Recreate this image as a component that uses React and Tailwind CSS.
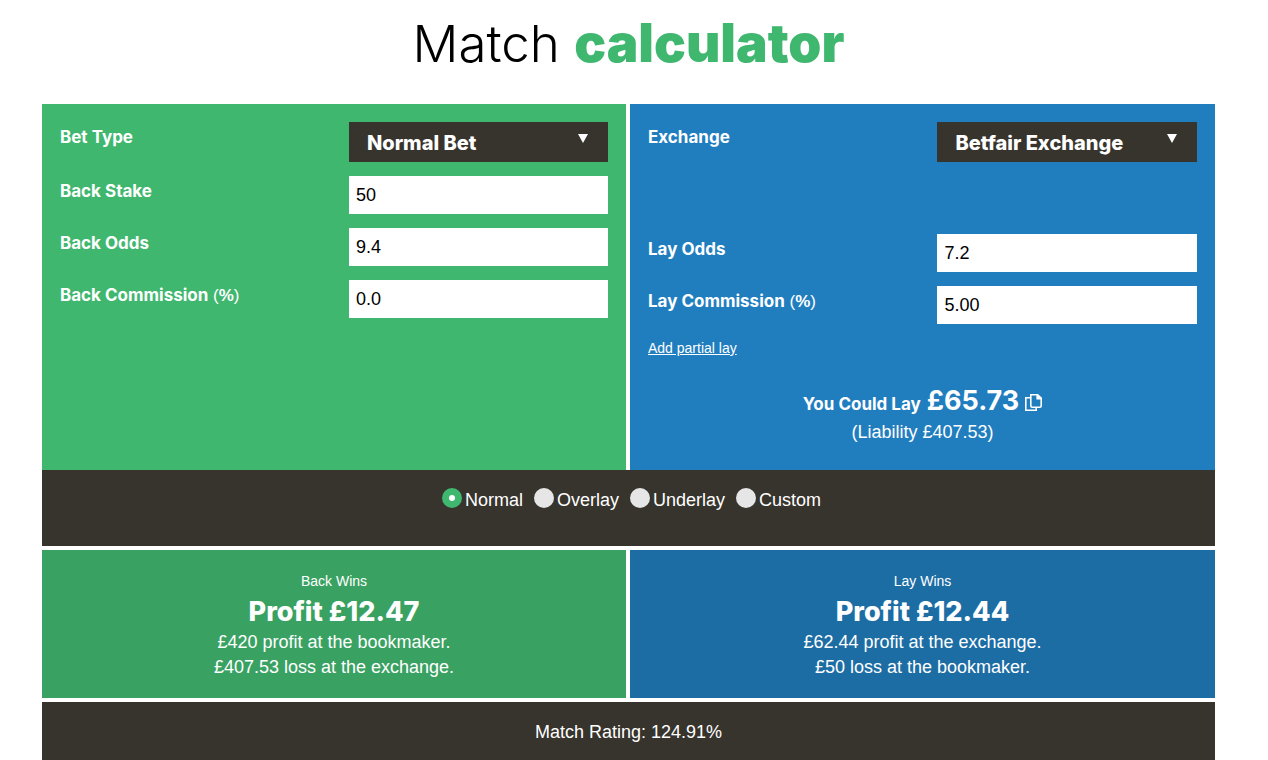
import React, { useState } from 'react';

const STAKE_MODES = ['Normal', 'Overlay', 'Underlay', 'Custom'];

function Row({ id, label, percent, children }) {
  return (
    <div className="grid grid-cols-[29fr_26fr] items-start">
      <label htmlFor={id} className="pt-[3px] font-['Inter',sans-serif] text-[17px] leading-6 font-bold">
        {label}
        {percent && (
          <span className="font-['Liberation_Sans',sans-serif] font-normal"> (<b>%</b>)</span>
        )}
      </label>
      {children}
    </div>
  );
}

function SelectBox({ id, options }) {
  return (
    <div className="relative">
      <select
        id={id}
        className="block h-10 w-full appearance-none bg-[#37342d] px-[18px] pt-0.5 font-['Inter',sans-serif] text-[20px] font-extrabold text-white outline-none"
      >
        {options.map(o => <option key={o}>{o}</option>)}
      </select>
      <svg width="10" height="9" viewBox="0 0 10 9" className="pointer-events-none absolute top-3 right-5">
        <path d="M0 0H10L5 9Z" fill="#fff" />
      </svg>
    </div>
  );
}

function TextField({ id, value }) {
  return (
    <input
      id={id}
      type="text"
      defaultValue={value}
      className="block h-[38px] w-full bg-white px-[7px] font-['Liberation_Sans',sans-serif] text-lg text-black outline-none"
    />
  );
}

function Outcome({ title, profit, lines, className }) {
  return (
    <section className={`flex h-[148px] flex-col items-center pt-[19px] text-center ${className}`}>
      <h2 className="text-sm leading-6">{title}</h2>
      <p className="font-['Inter',sans-serif] text-[27px] leading-[37px] font-extrabold">Profit {profit}</p>
      {lines.map(line => <p key={line} className="text-lg leading-[25px]">{line}</p>)}
    </section>
  );
}

export default function App() {
  const [mode, setMode] = useState('Normal');

  return (
    <main className="bg-white pr-[53px] pl-[42px] font-['Liberation_Sans',sans-serif] text-white">
      <h1 className="h-[104px] pt-2 text-center font-['Inter',sans-serif] text-[51px] leading-[70px] font-light text-black">
        Match <span className="text-[53px] font-black text-[#3fb76f]">calculator</span>
      </h1>

      <div className="grid grid-cols-[584fr_585fr] gap-x-1">
        {/* Back side */}
        <section className="flex h-[366px] flex-col gap-3.5 bg-[#3fb76f] p-[18px]">
          <Row id="bet-type" label="Bet Type">
            <SelectBox id="bet-type" options={['Normal Bet', 'Free Bet (SNR)', 'Free Bet (SR)']} />
          </Row>
          <Row id="back-stake" label="Back Stake"><TextField id="back-stake" value="50" /></Row>
          <Row id="back-odds" label="Back Odds"><TextField id="back-odds" value="9.4" /></Row>
          <Row id="back-commission" label="Back Commission" percent>
            <TextField id="back-commission" value="0.0" />
          </Row>
        </section>

        {/* Lay side */}
        <section className="flex h-[366px] flex-col bg-[#207ebf] p-[18px]">
          <Row id="exchange" label="Exchange">
            <SelectBox id="exchange" options={['Betfair Exchange', 'Smarkets', 'Matchbook']} />
          </Row>
          <div className="mt-[72px] flex flex-col gap-3.5">
            <Row id="lay-odds" label="Lay Odds"><TextField id="lay-odds" value="7.2" /></Row>
            <Row id="lay-commission" label="Lay Commission" percent>
              <TextField id="lay-commission" value="5.00" />
            </Row>
          </div>
          <a href="#partial" className="mt-3 self-start text-sm leading-6 underline">Add partial lay</a>
          <div className="mt-6 text-center">
            <p className="flex items-baseline justify-center font-['Inter',sans-serif] text-[17px] leading-[34px] font-bold">
              You Could Lay
              <strong className="ml-1.5 text-[27px] font-bold">£65.73</strong>
              <button type="button" aria-label="Copy lay stake" className="ml-1.5">
                <svg width="17" height="17" viewBox="0 0 17 17" fill="none" stroke="#fff" strokeWidth="1.6" className="translate-y-px">
                  <path d="M5.8 .8H12.6L16.2 4.2V11.8Q16.2 13.2 14.8 13.2H7.2Q5.8 13.2 5.8 11.8Z" />
                  <path d="M11.4 .8H12.6L16.2 4.2V5.4H11.4Z" fill="#fff" stroke="none" />
                  <path d="M5.8 3.8H.8V16.2H11.2V13.2" />
                </svg>
              </button>
            </p>
            <p className="text-lg leading-[22px]">(Liability £407.53)</p>
          </div>
        </section>
      </div>

      <fieldset className="flex h-[76px] items-start justify-center gap-[11px] bg-[#37342d] pt-[18px] pl-1.5">
        {STAKE_MODES.map(m => (
          <label key={m} className="flex items-start gap-[3px] text-lg leading-6">
            <input
              type="radio"
              name="mode"
              checked={mode === m}
              onChange={() => setMode(m)}
              className="size-5 appearance-none rounded-full bg-[#e6e6e6] checked:border-7 checked:border-[#3fb76f] checked:bg-white"
            />
            {m}
          </label>
        ))}
      </fieldset>

      <div className="my-1 grid grid-cols-[584fr_585fr] gap-x-1">
        <Outcome
          title="Back Wins"
          profit="£12.47"
          lines={['£420 profit at the bookmaker.', '£407.53 loss at the exchange.']}
          className="bg-[#39a262]"
        />
        <Outcome
          title="Lay Wins"
          profit="£12.44"
          lines={['£62.44 profit at the exchange.', '£50 loss at the bookmaker.']}
          className="bg-[#1d6da5]"
        />
      </div>

      <p className="h-[58px] bg-[#37342d] pt-[18px] text-center text-lg leading-6">Match Rating: 124.91%</p>
    </main>
  );
}
